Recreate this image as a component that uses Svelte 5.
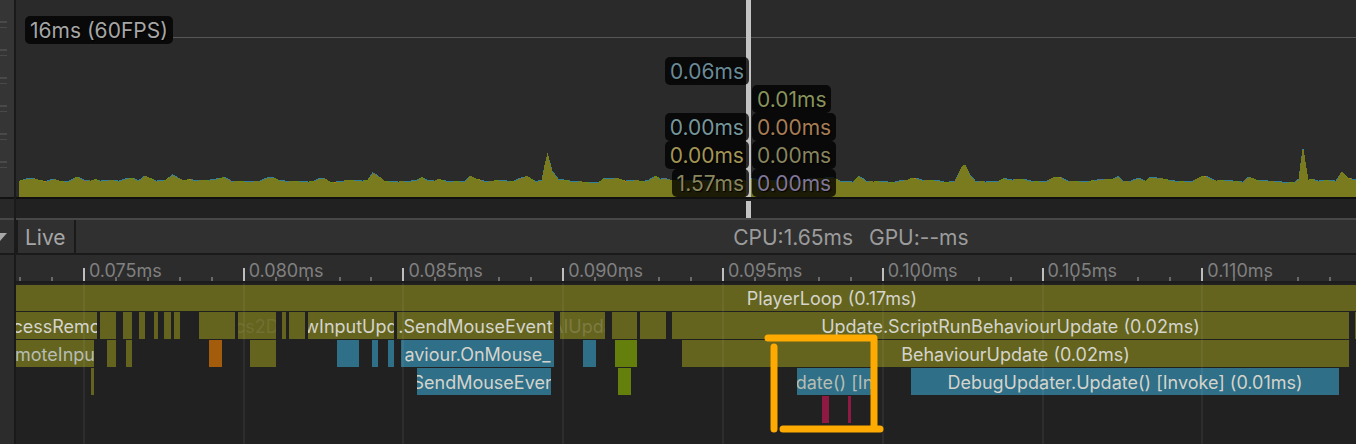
<script>
  const SPAN = 1340;
  const ORIGIN = 16;
  const pct = (n) => `${(n / SPAN) * 100}%`;

  // Frame time history: x, y of the top of the graph.
  const pts = [
    19,181,22,180,29,178,33,178.5,38,180,45,181.5,52,179,60,181.5,68,181,77,177,85,180.5,90,181,95,179.5,100,181,108,180.5,118,181,
    126,178.5,133,178.5,138,180.5,144,176,150,178.5,156,181,165,180.5,172,174.5,177,177.5,183,180.5,189,179.5,196,180.5,206,180.5,
    218,178.5,225,177.5,231,181,247,181,258,181.5,266,178,272,177.5,278,180,285,181,300,181.5,308,182,313,181,318,178.5,324,178.5,
    330,182.5,340,181.5,343,181,350,180.5,362,181,367,180,372,172.5,377,175.5,384,181,398,182,410,181,416,180,422,177.5,428,180.5,
    434,181,438,179.5,448,181.5,464,181.5,470,176,476,179,486,181.5,500,180.5,513,181.5,518,178.5,527,176.5,535,181.5,541,180,
    544,165,547,153,552,171,558,179,570,181,582,182,598,182.5,604,178,616,178,625,181,633,180,642,181.5,648,180,655,176,660,179,
    665,178.5,670,180,700,180,745,181,752,178,760,180,800,181,808,178.5,816,179,832,177,840,181,852,182,858,176,864,179,
    866,181,873,182,880,181,892,182.5,898,181,906,180.5,911,178.5,917,178.5,923,180.5,938,180.5,945,182.5,954,181,959,171,962,166,
    965,165,970,175,975,181,985,182,997,181.5,1004,178.5,1012,180,1022,179,1031,181,1046,181,1053,177.5,1060,177.5,1068,181,
    1078,181.5,1090,181,1102,179,1112,179.5,1118,176,1123,181,1130,181,1138,178,1145,181,1150,177,1160,178.5,1170,180.5,1180,181.5,
    1192,181,1200,177,1207,176.5,1216,181,1228,180.5,1242,182,1248,177,1257,180.5,1268,181,1280,181,1283,182.5,1294,182.5,1298,179,
    1300,163,1302,149,1303,149,1305,162,1308,180,1313,179.5,1318,181,1324,180.5,1335,181,1341,172,1348,178,1356,180
  ];
  const heights = [];
  for (let i = 0; i + 3 < pts.length; i += 2) {
    const [x0, y0, x1, y1] = pts.slice(i, i + 4);
    for (let x = x0; x < x1; x++) {
      heights.push([x - ORIGIN, Math.floor(y0 + ((y1 - y0) * (x - x0)) / (x1 - x0)) - 140]);
    }
  }
  const area = 'M3 57' + heights.map(([x, y]) => `V${y}H${x + 1}`).join('') + 'V57Z';
  const capColor = (i) => {
    const n = Math.floor(i / 5) * 37 % 29;
    if (n < 7) return 'scripts2';
    if (n === 11 && i % 5 < 2) return 'orange';
    if (n === 17 && i % 5 < 2) return 'violet';
    if (n > 23) return 'none';
    return 'blue';
  };
  const caps = {};
  heights.forEach(([x, y], i) => {
    const c = capColor(i);
    caps[c] = (caps[c] ?? '') + `M${x} ${y}h1v1h-1z`;
  });
  const capNames = ['blue', 'scripts2', 'orange', 'violet'];

  const leftValues = [['0.06ms', 'blue'], null, ['0.00ms', 'teal'], ['0.00ms', 'gold'], ['1.57ms', 'khaki']];
  const rightValues = [null, ['0.01ms', 'lime'], ['0.00ms', 'copper'], ['0.00ms', 'khaki'], ['0.00ms', 'lilac']];

  // Samples per depth: start, end, category, label, label tone.
  const lanes = [
    [[16, 1648, 'olive', 'PlayerLoop (0.17ms)']],
    [
      [16, 97, 'olive', 'cessRemo'], [100, 116, 'olive'], [123, 132, 'olive'], [139, 145, 'olive'], [154, 158, 'olive'],
      [164, 171, 'olive'], [174, 180, 'olive'], [199, 235, 'olive'], [238, 276, 'olive', 'cs2D', 'ghost'], [282, 286, 'olive'],
      [289, 305, 'olive'], [308, 394, 'olive', 'wInputUpd'], [397, 554, 'olive', '.SendMouseEvent'],
      [560, 605, 'olive', 'AIUpda', 'faint'], [612, 637, 'olive'], [640, 666, 'olive'],
      [672, 1349, 'olive', 'Update.ScriptRunBehaviourUpdate (0.02ms)'], [1355, 1356, 'olive']
    ],
    [
      [16, 94, 'olive', 'moteInpu', 'soft'], [107, 116, 'olive'], [126, 132, 'olive'], [209, 222, 'rust'], [250, 276, 'olive'],
      [337, 359, 'blue'], [372, 378, 'blue'], [388, 394, 'blue'], [401, 554, 'blue', 'aviour.OnMouse_'], [583, 596, 'blue'],
      [615, 637, 'green'], [682, 1349, 'olive', 'BehaviourUpdate (0.02ms)']
    ],
    [
      [91, 94, 'olive'], [417, 551, 'blue', 'SendMouseEven'], [618, 631, 'green'], [797, 872, 'blue', 'date() [In', 'soft'],
      [911, 1339, 'blue', 'DebugUpdater.Update() [Invoke] (0.01ms)']
    ],
    [[822, 829, 'crimson'], [848, 851, 'crimson']]
  ];
  const rows = lanes.map((lane) =>
    lane.map(([from, to, kind, text, tone], i) => ({
      gap: pct(from - (i ? lane[i - 1][1] : ORIGIN)),
      width: pct(to - from),
      kind, text, tone
    }))
  );

  const ticks = Array.from({ length: 42 }, (_, i) => ({
    major: i % 5 === 2,
    label: i % 5 === 2 ? (0.075 + Math.floor(i / 5) * 0.005).toFixed(3) + 'ms' : ''
  }));
</script>

<main class="profiler">
  <aside class="side">
    <div class="handles">
      {#each Array(6) as _}<div class="handle"></div>{/each}
    </div>
    <div class="side-strip"></div>
    <button class="menu" aria-label="View">
      <svg width="7" height="8" viewBox="0 0 7 8"><path d="M-7 0H7L0 8Z" /></svg>
    </button>
  </aside>

  <div class="content">
    <section class="chart">
      <div class="target"><span class="tag">16ms (60FPS)</span></div>
      <svg class="graph" viewBox="0 0 1340 57" preserveAspectRatio="none" shape-rendering="crispEdges">
        <path class="area" d={area} />
        {#each capNames as c}<path class="cap-{c}" d={caps[c]} />{/each}
      </svg>
      <div class="cursor"></div>
      <div class="values">
        <div class="col left">
          {#each leftValues as v}
            <div class="slot">{#if v}<span class="tag {v[1]}">{v[0]}</span>{/if}</div>
          {/each}
        </div>
        <div class="col">
          {#each rightValues as v}
            <div class="slot">{#if v}<span class="tag {v[1]}">{v[0]}</span>{/if}</div>
          {/each}
        </div>
      </div>
    </section>
    <div class="strip"><div class="mark"></div></div>

    <header class="toolbar">
      <button class="live">Live</button>
      <div class="stats"><span>CPU:1.65ms</span><span>GPU:--ms</span></div>
    </header>

    <section class="timeline">
      <div class="ruler">
        {#each ticks as t}
          <div class="tick" class:major={t.major}><span>{t.label}</span></div>
        {/each}
      </div>
      <div class="lanes">
        {#each rows as row}
          <div class="lane">
            {#each row as b}
              <div class="bar {b.kind} {b.tone ?? ''}" style:width={b.width} style:margin-left={b.gap}>{#if b.text}<span>{b.text}</span>{/if}</div>
            {/each}
          </div>
        {/each}
        <div class="grid">
          {#each ticks as t}<div class="tick" class:line={t.major}></div>{/each}
        </div>
        <svg class="highlight" width="124" height="106" viewBox="0 0 124 106">
          <path d="M6 8H112M12 17V99M112 8V99M21 99H118" />
        </svg>
      </div>
    </section>
  </div>
</main>

<style>
  :global(body) { background: #212121; }
  .profiler {
    display: flex;
    min-height: 100vh;
    overflow: hidden;
    font-family: Inter, sans-serif;
    font-size: 21px;
    color: #a6a6a6;
    background: #212121;
  }
  button { font: inherit; color: inherit; border: 0; margin: 0; padding: 0; background: none; }
  .side { flex: none; width: 14px; border-right: 2px solid #1a1a1a; background: #2c2c2c; }
  .handles { height: 197px; box-sizing: border-box; padding-top: 21px; background: #353535; }
  .handle { width: 7px; height: 4px; margin-bottom: 21px; border-top: 2px solid #494949; border-bottom: 1px solid #494949; }
  .side-strip { height: 19px; border-top: 2px solid #121212; border-bottom: 2px solid #474747; background: #282828; }
  .menu { display: flex; align-items: center; width: 100%; height: 33px; border-bottom: 2px solid #1a1a1a; box-sizing: content-box; background: #303030; }
  .menu path { fill: #a8a8a8; }

  .content { flex: 1; min-width: 0; display: flex; flex-direction: column; }
  .chart { position: relative; height: 197px; background: #2a2a2a; border-bottom: 2px solid #101010; }
  .target { display: flex; align-items: flex-start; padding: 16px 0 0 9px; }
  .target::after { content: ''; flex: 1; height: 1px; margin-top: 21px; background: #565656; }
  .tag {
    display: block; box-sizing: border-box; height: 28px; padding: 0 5px; line-height: 29px; border-radius: 5px;
    background: rgba(0, 0, 0, 0.78); text-shadow: 1px 1px 1px #000;
  }
  .graph { position: absolute; left: 0; bottom: 0; width: 100%; height: 57px; }
  .area { fill: #7a7a1e; }
  .cap-blue { fill: #31809c; }
  .cap-scripts2 { fill: #6c8c10; }
  .cap-orange { fill: #c47812; }
  .cap-violet { fill: #76617c; }
  .cursor, .mark { position: absolute; left: 54.48%; width: 5px; background: #c4c4c4; }
  .cursor { top: 0; bottom: 0; }
  .values { position: absolute; left: 0; right: 0; bottom: 0; display: grid; grid-template-columns: 54.7% 1fr; column-gap: 3px; }
  .col { display: flex; flex-direction: column; }
  .left { align-items: flex-end; }
  .slot { display: flex; height: 28px; }
  .tag.blue { color: #6a8b98; }
  .teal { color: #76979b; }
  .gold { color: #a39655; }
  .khaki { color: #88855f; }
  .lime { color: #87935c; }
  .copper { color: #a77d55; }
  .lilac { color: #80779a; }

  .strip { position: relative; height: 19px; border-bottom: 2px solid #474747; background: #212121; }
  .mark { top: 2px; bottom: 0; }

  .toolbar { display: flex; height: 33px; border-bottom: 2px solid #1a1a1a; background: #303030; }
  .live { flex: none; padding: 1px 8px 0 7px; border: solid #1a1a1a; border-width: 0 2px; }
  .stats { flex: 1; display: flex; gap: 16px; align-items: center; padding-top: 1px; color: #9c9c9c; }
  .stats::before { content: ''; flex: 19; }
  .stats::after { content: ''; flex: 11; }

  .timeline { flex: 1; display: flex; flex-direction: column; }
  .ruler { display: flex; height: 26px; padding-left: 3px; border-bottom: 2px solid #1c1c1c; overflow: hidden; background: #2c2c2c; }
  .tick { flex: none; box-sizing: border-box; width: 2.39%; }
  .ruler .tick { position: relative; display: flex; align-items: center; white-space: nowrap; font-size: 18px; color: #808080; }
  .ruler .tick span { padding: 4px 0 0 6px; }
  .ruler .tick::before { content: ''; position: absolute; left: 0; bottom: 0; width: 2px; height: 4px; background: #696969; }
  .ruler .major::before { height: 13px; background: #bdbdbd; }
  .lanes { flex: 1; position: relative; display: flex; flex-direction: column; gap: 1px; padding: 2px 0 20px; background: #212121; }
  .lane { display: flex; height: 27px; }
  .lane:first-child { height: 26px; }
  .bar { flex: none; box-sizing: border-box; display: flex; align-items: center; justify-content: center; padding-top: 1px; overflow: hidden; white-space: nowrap; font-size: 18px; color: #d4d4cc; }
  .bar.olive { background: #64641e; }
  .bar.blue { background: #2f6f88; }
  .bar.rust { background: #a35c0b; }
  .bar.green { background: #647f0c; }
  .bar.crimson { background: #8e1a43; }
  .bar.soft { color: #b6bdb4; }
  .bar.faint { color: #7d7b42; }
  .bar.ghost { color: #707030; }
  .grid { position: absolute; inset: 0; display: flex; padding-left: 3px; overflow: hidden; }
  .line { border-left: 2px solid rgba(255, 255, 255, 0.055); }
  .highlight { position: absolute; left: 55.67%; top: 47px; }
  .highlight path { fill: none; stroke: #ffaa00; stroke-width: 7; stroke-linecap: round; }
</style>
